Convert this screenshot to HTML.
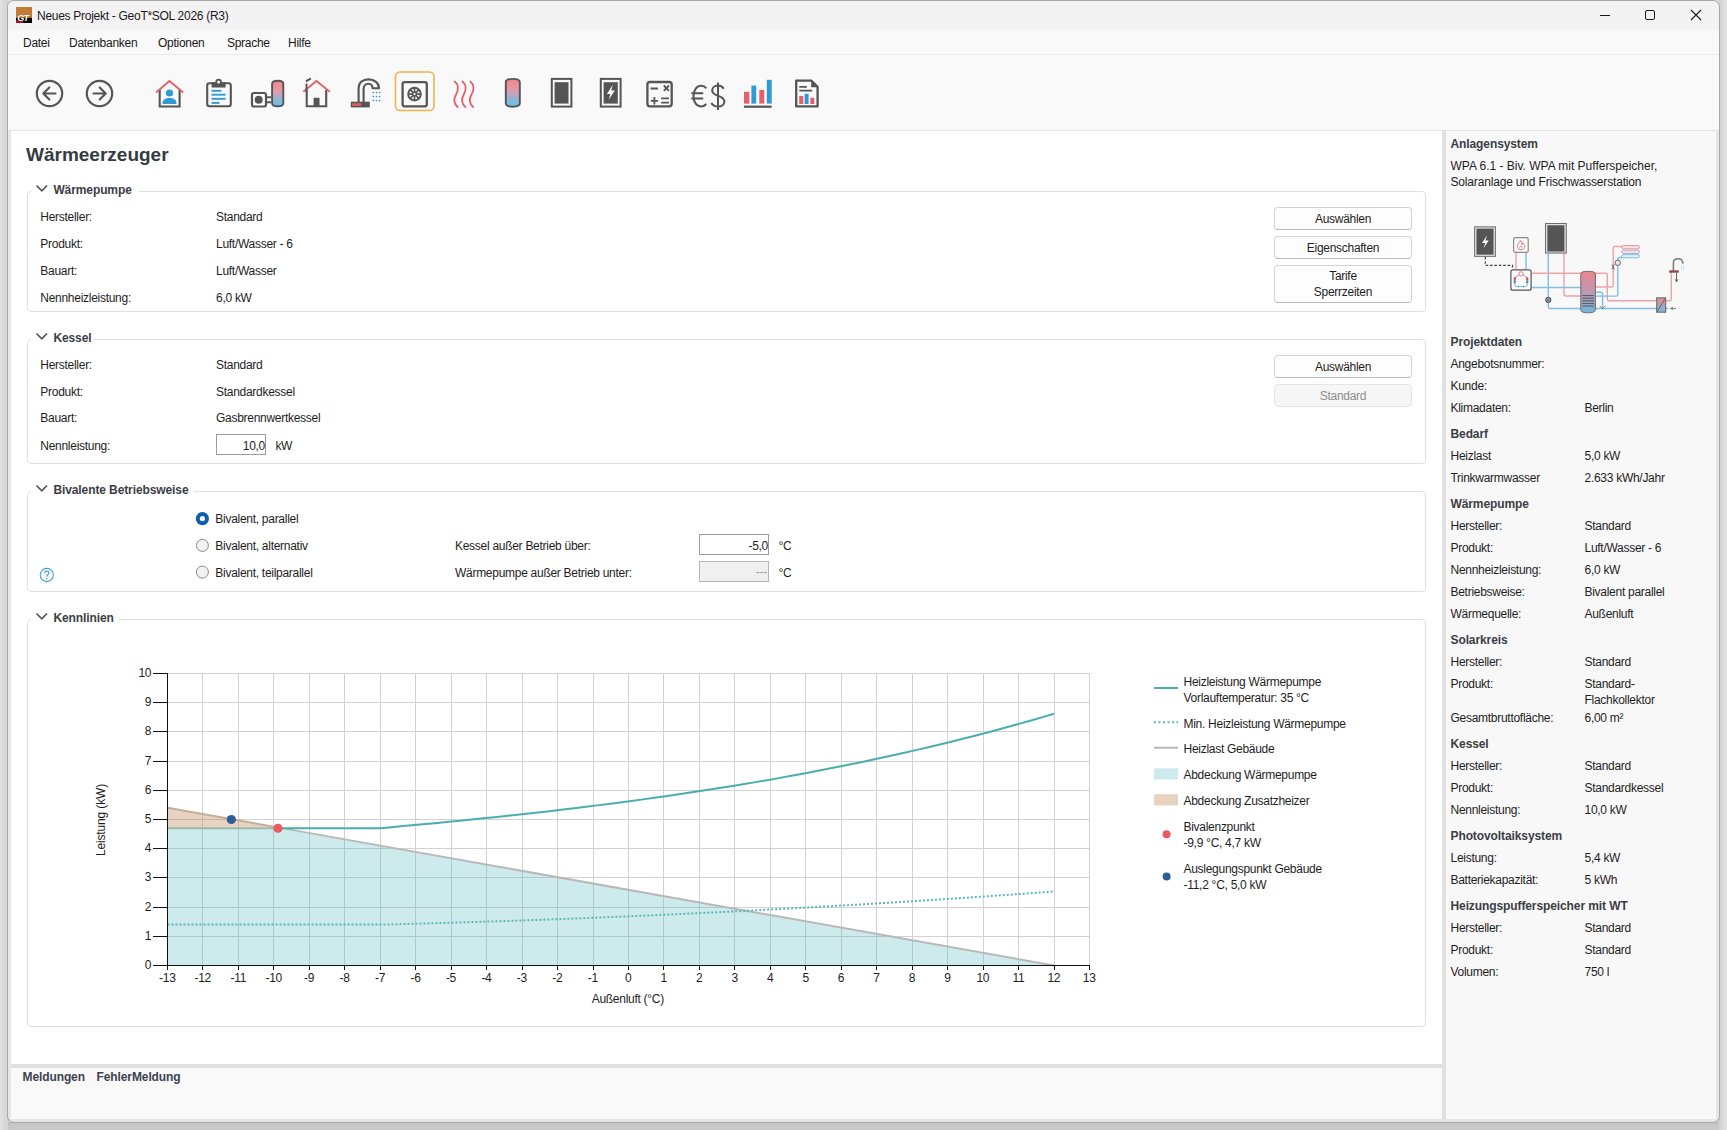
<!DOCTYPE html>
<html><head><meta charset="utf-8"><title>GeoT*SOL</title>
<style>
html,body{margin:0;padding:0;width:1727px;height:1130px;overflow:hidden;background:#dcdcdc}
body{position:relative;font-family:"Liberation Sans",sans-serif}
.t{position:absolute;white-space:nowrap;line-height:1;font-family:"Liberation Sans",sans-serif}
.r{position:absolute;box-sizing:border-box}
svg.r{overflow:visible}
</style></head><body>
<div class="r" style="left:0px;top:0px;width:1727px;height:1130px;background:#dcdcdc"></div>
<div class="r" style="left:0px;top:0px;width:8px;height:1130px;background:linear-gradient(to right,#e2e2e2,#d9d9d9 50%,#d4d4d4)"></div>
<div class="r" style="left:1719px;top:0px;width:8px;height:1130px;background:linear-gradient(to right,#d0d0d0,#dadada 40%,#e2e2e2)"></div>
<div class="r" style="left:8px;top:1122px;width:1711px;height:8px;background:linear-gradient(to bottom,#bdbdbd,#c8c8c8 40%,#cacaca)"></div>
<div class="r" style="left:7px;top:0px;width:1713px;height:1123px;background:#a8a8a8;border-radius:7px"></div>
<div class="r" style="left:8px;top:1px;width:1711px;height:1121px;background:#e6e6e6;border-radius:6px"></div>
<div class="r" style="left:8px;top:1px;width:1711px;height:29px;background:#f3f3f3;border-radius:6px 6px 0 0"></div>
<div class="r" style="left:8px;top:30px;width:1711px;height:100px;background:#f9f9f9"></div>
<div class="r" style="left:8px;top:54px;width:1711px;height:1px;background:#ebebeb"></div>
<div class="r" style="left:8px;top:130px;width:1711px;height:1px;background:#e3e3e3"></div>
<div class="r" style="left:11px;top:131px;width:1431px;height:933px;background:#ffffff"></div>
<div class="r" style="left:1442px;top:131px;width:4px;height:988px;background:#e0e0e0"></div>
<div class="r" style="left:1446px;top:131px;width:270px;height:988px;background:#f8f8f8"></div>
<div class="r" style="left:11px;top:1064px;width:1431px;height:4px;background:#e0e0e0"></div>
<div class="r" style="left:11px;top:1068px;width:1431px;height:51px;background:#f9f9f9"></div>
<svg class="r" style="left:16px;top:7px;" width="16" height="16" viewBox="0 0 16 16"><rect x="0" y="0" width="16" height="16" fill="#c27a36"/><rect x="0" y="10.8" width="16" height="5.2" fill="#000"/><rect x="0" y="13.2" width="7" height="2.8" fill="#a01428"/><text x="1.2" y="14.3" font-family="Liberation Sans" font-weight="bold" font-style="italic" font-size="9" fill="#fff" letter-spacing="-0.6">GT</text></svg>
<div class="t" style="left:37.00px;top:10px;font-size:12px;color:#1a1a1a;letter-spacing:-0.28px;">Neues Projekt - GeoT*SOL 2026 (R3)</div>
<div class="r" style="left:1600px;top:15px;width:10px;height:1px;background:#1a1a1a"></div>
<div class="r" style="left:1645px;top:10px;width:10px;height:10px;border:1px solid #1a1a1a;border-radius:2px;box-sizing:border-box"></div>
<svg class="r" style="left:1690px;top:9px;" width="12" height="12" viewBox="0 0 12 12"><path d="M1 1L11 11M11 1L1 11" stroke="#1a1a1a" stroke-width="1.1"/></svg>
<div class="t" style="left:23.00px;top:37px;font-size:12px;color:#1a1a1a;letter-spacing:-0.28px;">Datei</div>
<div class="t" style="left:69.00px;top:37px;font-size:12px;color:#1a1a1a;letter-spacing:-0.28px;">Datenbanken</div>
<div class="t" style="left:158.00px;top:37px;font-size:12px;color:#1a1a1a;letter-spacing:-0.28px;">Optionen</div>
<div class="t" style="left:227.00px;top:37px;font-size:12px;color:#1a1a1a;letter-spacing:-0.28px;">Sprache</div>
<div class="t" style="left:288.00px;top:37px;font-size:12px;color:#1a1a1a;letter-spacing:-0.28px;">Hilfe</div>
<div class="t" style="left:22.50px;top:1071px;font-size:12px;font-weight:bold;color:#3b4350;letter-spacing:-0.1px;">Meldungen</div>
<div class="t" style="left:96.50px;top:1071px;font-size:12px;font-weight:bold;color:#3b4350;letter-spacing:-0.1px;">FehlerMeldung</div>
<svg class="r" style="left:0px;top:0px;" width="850" height="130" viewBox="0 0 850 130"><circle cx="49.5" cy="93.5" r="12.7" fill="none" stroke="#555555" stroke-width="2.2"/><path d="M55.5 93.5H43.5M49.3 87.5L43.3 93.5L49.3 99.5" fill="none" stroke="#555555" stroke-width="2.2" stroke-linecap="round" stroke-linejoin="round"/><circle cx="99.5" cy="93.5" r="12.7" fill="none" stroke="#555555" stroke-width="2.2"/><path d="M93.5 93.5H105.5M99.7 87.5L105.7 93.5L99.7 99.5" fill="none" stroke="#555555" stroke-width="2.2" stroke-linecap="round" stroke-linejoin="round"/><path d="M159.7 89.5V106.5H179.6V89.5" fill="none" stroke="#555555" stroke-width="2.1"/><path d="M156 92.5L169.5 81L183.2 92.5" fill="none" stroke="#e2606a" stroke-width="1.8"/><circle cx="169.5" cy="93" r="3.6" fill="#2e9bd6"/><path d="M162.6 104V102.5C162.6 99.8 165.5 98 169.5 98C173.5 98 176.4 99.8 176.4 102.5V104Z" fill="#2e9bd6"/><rect x="207.2" y="83.3" width="23.6" height="23" rx="2.2" fill="none" stroke="#555555" stroke-width="2.1"/><rect x="211.6" y="82.3" width="14" height="5.2" fill="#555555"/><circle cx="218.6" cy="82" r="2.4" fill="#f9f9f9" stroke="#555555" stroke-width="1.7"/><path d="M211.5 90.8H221.5" stroke="#2e9bd6" stroke-width="1.9"/><path d="M211.5 94.7H225.6" stroke="#2e9bd6" stroke-width="1.9"/><path d="M211.5 98.8H225.6" stroke="#2e9bd6" stroke-width="1.9"/><path d="M211.5 102.9H219.5" stroke="#2e9bd6" stroke-width="1.9"/><defs><linearGradient id="tg" x1="0" y1="0" x2="0" y2="1"><stop offset="0.1" stop-color="#f08890"/><stop offset="0.4" stop-color="#e29cab"/><stop offset="0.62" stop-color="#aeaac8"/><stop offset="0.9" stop-color="#6cc2e6"/></linearGradient></defs><rect x="252" y="93" width="14" height="13.5" rx="2" fill="#fff" stroke="#555555" stroke-width="2.2"/><circle cx="258.7" cy="99.7" r="4" fill="#555555"/><path d="M266 97.2H271M266 102.3H271" stroke="#555555" stroke-width="2"/><path d="M272.1 84C272.1 82 274.8 80.8 277.8 80.8C280.8 80.8 283.3 82 283.3 84V103.2C283.3 105.2 280.8 106.3 277.8 106.3C274.8 106.3 272.1 105.2 272.1 103.2Z" fill="url(#tg)" stroke="#555555" stroke-width="1.9"/><path d="M306.7 90V106.3H326.2V90" fill="none" stroke="#555555" stroke-width="2.1"/><rect x="313.6" y="97.8" width="5.9" height="8.6" fill="#555555"/><path d="M303.3 91.8L316.4 81L329.9 91.8" fill="none" stroke="#e2606a" stroke-width="1.8"/><path d="M306.5 92V83.5M305.9 81.4L310.9 78.4" fill="none" stroke="#555555" stroke-width="1.9"/><path d="M358.6 102.5V88.5C358.6 82.4 362.8 79.4 368.6 79.4C374.4 79.4 379 83 379 88.2H372.6C372.6 85.6 370.8 83.8 368.4 83.8C365.6 83.8 363.6 85.8 363.6 88.8V102.5" fill="none" stroke="#555555" stroke-width="2.1" stroke-linejoin="round"/><rect x="350.8" y="101.7" width="19" height="5.7" fill="#555555"/><rect x="352" y="103.2" width="9.2" height="2.7" fill="#e05d66"/><circle cx="373.4" cy="92.5" r="0.85" fill="#3f8db8"/><circle cx="376.5" cy="92.5" r="0.85" fill="#3f8db8"/><circle cx="379.6" cy="92.5" r="0.85" fill="#3f8db8"/><circle cx="373.4" cy="96.5" r="0.85" fill="#3f8db8"/><circle cx="376.5" cy="96.5" r="0.85" fill="#3f8db8"/><circle cx="379.6" cy="96.5" r="0.85" fill="#3f8db8"/><circle cx="373.4" cy="100.5" r="0.85" fill="#3f8db8"/><circle cx="376.5" cy="100.5" r="0.85" fill="#3f8db8"/><circle cx="379.6" cy="100.5" r="0.85" fill="#3f8db8"/><rect x="395.5" y="72" width="38.5" height="38.5" rx="4.5" fill="none" stroke="#ebb54f" stroke-width="1.6"/><rect x="402.6" y="82.1" width="24.2" height="24.2" rx="2" fill="none" stroke="#555555" stroke-width="2.3"/><circle cx="414.5" cy="94.1" r="6.3" fill="none" stroke="#555555" stroke-width="2"/><circle cx="414.5" cy="94.1" r="2.6" fill="#555555"/><circle cx="414.5" cy="94.1" r="1.1" fill="#f9f9f9"/><path d="M416.50 94.10L420.50 94.10" stroke="#555555" stroke-width="1.7"/><path d="M415.91 95.51L418.74 98.34" stroke="#555555" stroke-width="1.7"/><path d="M414.50 96.10L414.50 100.10" stroke="#555555" stroke-width="1.7"/><path d="M413.09 95.51L410.26 98.34" stroke="#555555" stroke-width="1.7"/><path d="M412.50 94.10L408.50 94.10" stroke="#555555" stroke-width="1.7"/><path d="M413.09 92.69L410.26 89.86" stroke="#555555" stroke-width="1.7"/><path d="M414.50 92.10L414.50 88.10" stroke="#555555" stroke-width="1.7"/><path d="M415.91 92.69L418.74 89.86" stroke="#555555" stroke-width="1.7"/><path d="M454.7 81.5C458.7 84.5 458.7 90 456.2 94.3C453.7 98.5 453.7 103.5 457.7 107" fill="none" stroke="#e2606a" stroke-width="1.8" stroke-linecap="round"/><path d="M462.4 81.5C466.4 84.5 466.4 90 463.9 94.3C461.4 98.5 461.4 103.5 465.4 107" fill="none" stroke="#e2606a" stroke-width="1.8" stroke-linecap="round"/><path d="M470.2 81.5C474.2 84.5 474.2 90 471.7 94.3C469.2 98.5 469.2 103.5 473.2 107" fill="none" stroke="#e2606a" stroke-width="1.8" stroke-linecap="round"/><path d="M505.8 82.3C505.8 80 509 78.9 512.8 78.9C516.6 78.9 519.8 80 519.8 82.3V103.3C519.8 105.6 516.6 106.7 512.8 106.7C509 106.7 505.8 105.6 505.8 103.3Z" fill="url(#tg)" stroke="#555555" stroke-width="1.9"/><rect x="551.8" y="78.9" width="19.6" height="27.7" fill="none" stroke="#555555" stroke-width="2"/><rect x="554.6" y="82.2" width="13.9" height="21.4" fill="#555555"/><rect x="600.8" y="78.9" width="19.8" height="27.7" fill="none" stroke="#555555" stroke-width="2"/><rect x="603.6" y="82.2" width="14.2" height="21.4" fill="#555555"/><path d="M612.8 84.8L606.9 94H610.4L608.6 99.8L614.9 90.6H611.3Z" fill="#fff"/><rect x="647.4" y="82" width="24.3" height="24.3" rx="2.5" fill="none" stroke="#555555" stroke-width="2.3"/><path d="M650.5 88.5H658M663.8 85.5L669 90.8M669 85.5L663.8 90.8M650.8 100.8H658M654.4 97V104.6M661.2 98.3H669M661.2 102.6H669" stroke="#555555" stroke-width="1.8"/><path d="M706.3 88.3C705 86.6 703.2 85.8 701.3 85.8C696.8 85.8 693.5 90 693.5 96.2C693.5 102.4 696.8 106.4 701.3 106.4C703.2 106.4 705 105.6 706.3 104M691.3 93.2H703.2M691.3 98.6H703.2" fill="none" stroke="#555555" stroke-width="2"/><path d="M723.8 88.8C722.5 86.5 720.3 85.6 718 85.6C714.5 85.6 712.2 87.6 712.2 90.5C712.2 97.2 724.4 94.6 724.4 101.6C724.4 104.7 721.7 106.6 718.1 106.6C715.2 106.6 712.6 105.3 711.3 103M718 82.6V110" fill="none" stroke="#555555" stroke-width="2"/><rect x="743.9" y="105.6" width="27.8" height="2.2" fill="#555555"/><rect x="744" y="91.8" width="5.4" height="11.8" fill="#e2606a"/><rect x="751.4" y="85.6" width="4.8" height="18" fill="#2e9bd6"/><rect x="759.3" y="89.9" width="5" height="13.7" fill="#e2606a"/><rect x="766.8" y="79.8" width="4.9" height="23.8" fill="#2e9bd6"/><path d="M796.2 80.7H811.5L817.6 86.8V106.4H796.2Z" fill="none" stroke="#555555" stroke-width="2.3" stroke-linejoin="round"/><path d="M811.2 80.5L818 87.3H811.2Z" fill="#555555"/><path d="M799.3 86.8H806.8M799.3 90.6H812.2" stroke="#555555" stroke-width="1.7"/><rect x="799.2" y="96" width="4.1" height="8" fill="#e2606a"/><rect x="804.6" y="93.8" width="4" height="10.2" fill="#2e9bd6"/><rect x="810.3" y="97.8" width="4" height="6.2" fill="#e2606a"/></svg>
<div class="t" style="left:26.00px;top:145px;font-size:19px;font-weight:bold;color:#363a41;">Wärmeerzeuger</div>
<div class="r" style="left:27px;top:191px;width:1399px;height:121px;border:1px solid #e0e0e0;border-radius:4px"></div>
<div class="r" style="left:31px;top:188px;width:107.5px;height:7px;background:#fff"></div>
<svg class="r" style="left:35px;top:184px;" width="14" height="9" viewBox="0 0 14 9"><path d="M1.5 1.5L6.8 6.8L12.1 1.5" fill="none" stroke="#555" stroke-width="1.7"/></svg>
<div class="t" style="left:53.40px;top:184px;font-size:12px;font-weight:bold;color:#3b3e45;letter-spacing:-0.1px;">Wärmepumpe</div>
<div class="t" style="left:40.30px;top:211px;font-size:12px;color:#1e1e1e;letter-spacing:-0.28px;">Hersteller:</div>
<div class="t" style="left:216.00px;top:211px;font-size:12px;color:#1e1e1e;letter-spacing:-0.28px;">Standard</div>
<div class="t" style="left:40.30px;top:238px;font-size:12px;color:#1e1e1e;letter-spacing:-0.28px;">Produkt:</div>
<div class="t" style="left:216.00px;top:238px;font-size:12px;color:#1e1e1e;letter-spacing:-0.28px;">Luft/Wasser - 6</div>
<div class="t" style="left:40.30px;top:265px;font-size:12px;color:#1e1e1e;letter-spacing:-0.28px;">Bauart:</div>
<div class="t" style="left:216.00px;top:265px;font-size:12px;color:#1e1e1e;letter-spacing:-0.28px;">Luft/Wasser</div>
<div class="t" style="left:40.30px;top:292px;font-size:12px;color:#1e1e1e;letter-spacing:-0.28px;">Nennheizleistung:</div>
<div class="t" style="left:216.00px;top:292px;font-size:12px;color:#1e1e1e;letter-spacing:-0.28px;">6,0 kW</div>
<div class="r" style="left:1274px;top:207px;width:138px;height:23px;background:#fdfdfd;border:1px solid #d3d3d3;border-bottom-color:#b9b9b9;border-radius:4px"></div>
<div class="t" style="left:1043.00px;width:600px;text-align:center;top:213px;font-size:12px;color:#1e1e1e;letter-spacing:-0.28px;">Auswählen</div>
<div class="r" style="left:1274px;top:236px;width:138px;height:23px;background:#fdfdfd;border:1px solid #d3d3d3;border-bottom-color:#b9b9b9;border-radius:4px"></div>
<div class="t" style="left:1043.00px;width:600px;text-align:center;top:242px;font-size:12px;color:#1e1e1e;letter-spacing:-0.28px;">Eigenschaften</div>
<div class="r" style="left:1274px;top:265px;width:138px;height:38px;background:#fdfdfd;border:1px solid #d3d3d3;border-bottom-color:#b9b9b9;border-radius:4px"></div>
<div class="t" style="left:1043.00px;width:600px;text-align:center;top:270px;font-size:12px;color:#1e1e1e;letter-spacing:-0.28px;">Tarife</div>
<div class="t" style="left:1043.00px;width:600px;text-align:center;top:286px;font-size:12px;color:#1e1e1e;letter-spacing:-0.28px;">Sperrzeiten</div>
<div class="r" style="left:27px;top:339px;width:1399px;height:125px;border:1px solid #e0e0e0;border-radius:4px"></div>
<div class="r" style="left:31px;top:336px;width:62px;height:7px;background:#fff"></div>
<svg class="r" style="left:35px;top:332px;" width="14" height="9" viewBox="0 0 14 9"><path d="M1.5 1.5L6.8 6.8L12.1 1.5" fill="none" stroke="#555" stroke-width="1.7"/></svg>
<div class="t" style="left:53.40px;top:332px;font-size:12px;font-weight:bold;color:#3b3e45;letter-spacing:-0.1px;">Kessel</div>
<div class="t" style="left:40.30px;top:359px;font-size:12px;color:#1e1e1e;letter-spacing:-0.28px;">Hersteller:</div>
<div class="t" style="left:216.00px;top:359px;font-size:12px;color:#1e1e1e;letter-spacing:-0.28px;">Standard</div>
<div class="t" style="left:40.30px;top:386px;font-size:12px;color:#1e1e1e;letter-spacing:-0.28px;">Produkt:</div>
<div class="t" style="left:216.00px;top:386px;font-size:12px;color:#1e1e1e;letter-spacing:-0.28px;">Standardkessel</div>
<div class="t" style="left:40.30px;top:412px;font-size:12px;color:#1e1e1e;letter-spacing:-0.28px;">Bauart:</div>
<div class="t" style="left:216.00px;top:412px;font-size:12px;color:#1e1e1e;letter-spacing:-0.28px;">Gasbrennwertkessel</div>
<div class="t" style="left:40.30px;top:440px;font-size:12px;color:#1e1e1e;letter-spacing:-0.28px;">Nennleistung:</div>
<div class="r" style="left:216px;top:434px;width:50px;height:21px;background:#fff;border:1px solid #9c9c9c"></div>
<div class="t" style="left:-335.00px;width:600px;text-align:right;top:440px;font-size:12px;color:#1e1e1e;letter-spacing:-0.28px;">10,0</div>
<div class="t" style="left:275.40px;top:440px;font-size:12px;color:#1e1e1e;letter-spacing:-0.28px;">kW</div>
<div class="r" style="left:1274px;top:355px;width:138px;height:23px;background:#fdfdfd;border:1px solid #d3d3d3;border-bottom-color:#b9b9b9;border-radius:4px"></div>
<div class="t" style="left:1043.00px;width:600px;text-align:center;top:361px;font-size:12px;color:#1e1e1e;letter-spacing:-0.28px;">Auswählen</div>
<div class="r" style="left:1274px;top:384px;width:138px;height:23px;background:#f6f6f6;border:1px solid #e6e6e6;border-radius:4px"></div>
<div class="t" style="left:1043.00px;width:600px;text-align:center;top:390px;font-size:12px;color:#8d8d8d;letter-spacing:-0.28px;">Standard</div>
<div class="r" style="left:27px;top:491px;width:1399px;height:101px;border:1px solid #e0e0e0;border-radius:4px"></div>
<div class="r" style="left:31px;top:488px;width:163px;height:7px;background:#fff"></div>
<svg class="r" style="left:35px;top:484px;" width="14" height="9" viewBox="0 0 14 9"><path d="M1.5 1.5L6.8 6.8L12.1 1.5" fill="none" stroke="#555" stroke-width="1.7"/></svg>
<div class="t" style="left:53.40px;top:484px;font-size:12px;font-weight:bold;color:#3b3e45;letter-spacing:-0.1px;">Bivalente Betriebsweise</div>
<svg class="r" style="left:195px;top:511px;" width="15" height="15" viewBox="0 0 15 15"><circle cx="7.4" cy="7.6" r="6.6" fill="#0c5cb0"/><circle cx="7.4" cy="7.6" r="2.6" fill="#fff"/></svg>
<svg class="r" style="left:195px;top:538px;" width="15" height="15" viewBox="0 0 15 15"><circle cx="7.4" cy="7.4" r="6" fill="#f2f2f2" stroke="#8a8a8a" stroke-width="1"/></svg>
<svg class="r" style="left:195px;top:565px;" width="15" height="15" viewBox="0 0 15 15"><circle cx="7.4" cy="7.1" r="6" fill="#f2f2f2" stroke="#8a8a8a" stroke-width="1"/></svg>
<div class="t" style="left:215.30px;top:513px;font-size:12px;color:#1e1e1e;letter-spacing:-0.28px;">Bivalent, parallel</div>
<div class="t" style="left:215.30px;top:540px;font-size:12px;color:#1e1e1e;letter-spacing:-0.28px;">Bivalent, alternativ</div>
<div class="t" style="left:215.30px;top:567px;font-size:12px;color:#1e1e1e;letter-spacing:-0.28px;">Bivalent, teilparallel</div>
<svg class="r" style="left:39px;top:567px;" width="16" height="16" viewBox="0 0 16 16"><circle cx="7.8" cy="8" r="6.6" fill="none" stroke="#3aa3d6" stroke-width="1.1"/><path d="M5.7 6.2C5.7 4.9 6.6 4.1 7.8 4.1C9 4.1 9.9 4.9 9.9 6C9.9 7.4 7.8 7.6 7.8 9.3V9.8" fill="none" stroke="#3aa3d6" stroke-width="1.1"/><circle cx="7.8" cy="11.7" r="0.7" fill="#3aa3d6"/></svg>
<div class="t" style="left:455.00px;top:540px;font-size:12px;color:#1e1e1e;letter-spacing:-0.28px;">Kessel außer Betrieb über:</div>
<div class="t" style="left:455.00px;top:567px;font-size:12px;color:#1e1e1e;letter-spacing:-0.28px;">Wärmepumpe außer Betrieb unter:</div>
<div class="r" style="left:699px;top:534px;width:70px;height:21px;background:#fff;border:1px solid #9c9c9c"></div>
<div class="t" style="left:168.00px;width:600px;text-align:right;top:540px;font-size:12px;color:#1e1e1e;letter-spacing:-0.28px;">-5,0</div>
<div class="r" style="left:699px;top:561px;width:70px;height:21px;background:#f0f0f0;border:1px solid #b5b5b5"></div>
<div class="t" style="left:167.00px;width:600px;text-align:right;top:566px;font-size:12px;color:#9a9a9a;letter-spacing:-0.28px;">---</div>
<div class="t" style="left:778.60px;top:540px;font-size:12px;color:#1e1e1e;letter-spacing:-0.28px;">°C</div>
<div class="t" style="left:778.60px;top:567px;font-size:12px;color:#1e1e1e;letter-spacing:-0.28px;">°C</div>
<div class="r" style="left:27px;top:619px;width:1399px;height:408px;border:1px solid #e0e0e0;border-radius:4px"></div>
<div class="r" style="left:31px;top:616px;width:87.5px;height:7px;background:#fff"></div>
<svg class="r" style="left:35px;top:612px;" width="14" height="9" viewBox="0 0 14 9"><path d="M1.5 1.5L6.8 6.8L12.1 1.5" fill="none" stroke="#555" stroke-width="1.7"/></svg>
<div class="t" style="left:53.40px;top:612px;font-size:12px;font-weight:bold;color:#3b3e45;letter-spacing:-0.1px;">Kennlinien</div>
<svg class="r" style="left:0px;top:0px;" width="1100" height="1000" viewBox="0 0 1100 1000"><rect x="202" y="673" width="1" height="292" fill="#d2d2d2"/><rect x="238" y="673" width="1" height="292" fill="#d2d2d2"/><rect x="273" y="673" width="1" height="292" fill="#d2d2d2"/><rect x="309" y="673" width="1" height="292" fill="#d2d2d2"/><rect x="344" y="673" width="1" height="292" fill="#d2d2d2"/><rect x="380" y="673" width="1" height="292" fill="#d2d2d2"/><rect x="415" y="673" width="1" height="292" fill="#d2d2d2"/><rect x="451" y="673" width="1" height="292" fill="#d2d2d2"/><rect x="486" y="673" width="1" height="292" fill="#d2d2d2"/><rect x="522" y="673" width="1" height="292" fill="#d2d2d2"/><rect x="557" y="673" width="1" height="292" fill="#d2d2d2"/><rect x="593" y="673" width="1" height="292" fill="#d2d2d2"/><rect x="628" y="673" width="1" height="292" fill="#d2d2d2"/><rect x="663" y="673" width="1" height="292" fill="#d2d2d2"/><rect x="699" y="673" width="1" height="292" fill="#d2d2d2"/><rect x="734" y="673" width="1" height="292" fill="#d2d2d2"/><rect x="770" y="673" width="1" height="292" fill="#d2d2d2"/><rect x="805" y="673" width="1" height="292" fill="#d2d2d2"/><rect x="841" y="673" width="1" height="292" fill="#d2d2d2"/><rect x="876" y="673" width="1" height="292" fill="#d2d2d2"/><rect x="912" y="673" width="1" height="292" fill="#d2d2d2"/><rect x="947" y="673" width="1" height="292" fill="#d2d2d2"/><rect x="983" y="673" width="1" height="292" fill="#d2d2d2"/><rect x="1018" y="673" width="1" height="292" fill="#d2d2d2"/><rect x="1054" y="673" width="1" height="292" fill="#d2d2d2"/><rect x="1089" y="673" width="1" height="292" fill="#d2d2d2"/><rect x="168" y="936" width="922" height="1" fill="#d2d2d2"/><rect x="168" y="907" width="922" height="1" fill="#d2d2d2"/><rect x="168" y="877" width="922" height="1" fill="#d2d2d2"/><rect x="168" y="848" width="922" height="1" fill="#d2d2d2"/><rect x="168" y="819" width="922" height="1" fill="#d2d2d2"/><rect x="168" y="790" width="922" height="1" fill="#d2d2d2"/><rect x="168" y="761" width="922" height="1" fill="#d2d2d2"/><rect x="168" y="731" width="922" height="1" fill="#d2d2d2"/><rect x="168" y="702" width="922" height="1" fill="#d2d2d2"/><rect x="168" y="673" width="922" height="1" fill="#d2d2d2"/><path d="M167.50 965.50 L167.50 828.26 L277.43 828.26 L1054.00 965.50Z" fill="rgba(70,180,185,0.27)"/><path d="M167.50 807.82 L277.43 827.37 L167.50 828.26Z" fill="rgba(190,130,80,0.35)"/><path d="M167.50 807.82L277.43 827.37" stroke="#c2ad95" stroke-width="2" fill="none"/><path d="M277.43 827.37L1054.00 965.50" stroke="#b8b8b8" stroke-width="2" fill="none"/><path d="M167.50 828.26L277.43 828.26" stroke="#9db8a8" stroke-width="2" fill="none"/><path d="M277.43 828.26 L380.26 828.26 L380.26 828.18 L391.68 827.15 L403.10 826.11 L414.52 825.06 L425.94 823.99 L437.36 822.90 L448.78 821.79 L460.20 820.67 L471.61 819.52 L483.03 818.36 L494.45 817.17 L505.87 815.96 L517.29 814.73 L528.71 813.47 L540.13 812.19 L551.55 810.89 L562.97 809.55 L574.39 808.19 L585.81 806.80 L597.23 805.38 L608.65 803.93 L620.07 802.45 L631.49 800.93 L642.90 799.38 L654.32 797.80 L665.74 796.18 L677.16 794.53 L688.58 792.84 L700.00 791.11 L711.42 789.35 L722.84 787.54 L734.26 785.69 L745.68 783.80 L757.10 781.87 L768.52 779.90 L779.94 777.88 L791.36 775.82 L802.77 773.71 L814.19 771.55 L825.61 769.34 L837.03 767.09 L848.45 764.79 L859.87 762.43 L871.29 760.03 L882.71 757.57 L894.13 755.06 L905.55 752.50 L916.97 749.87 L928.39 747.20 L939.81 744.46 L951.23 741.67 L962.65 738.82 L974.06 735.91 L985.48 732.94 L996.90 729.91 L1008.32 726.81 L1019.74 723.66 L1031.16 720.43 L1042.58 717.15 L1054.00 713.79" stroke="#4aaeb0" stroke-width="2" fill="none" stroke-linejoin="round"/><path d="M167.50 924.62 L380.26 924.62 L380.26 924.62 L391.68 924.34 L403.10 924.04 L414.52 923.74 L425.94 923.43 L437.36 923.11 L448.78 922.78 L460.20 922.44 L471.61 922.09 L483.03 921.73 L494.45 921.36 L505.87 920.98 L517.29 920.59 L528.71 920.19 L540.13 919.78 L551.55 919.37 L562.97 918.94 L574.39 918.50 L585.81 918.06 L597.23 917.60 L608.65 917.14 L620.07 916.66 L631.49 916.18 L642.90 915.68 L654.32 915.18 L665.74 914.66 L677.16 914.14 L688.58 913.61 L700.00 913.07 L711.42 912.51 L722.84 911.95 L734.26 911.38 L745.68 910.80 L757.10 910.21 L768.52 909.61 L779.94 909.00 L791.36 908.38 L802.77 907.75 L814.19 907.12 L825.61 906.47 L837.03 905.81 L848.45 905.14 L859.87 904.47 L871.29 903.78 L882.71 903.08 L894.13 902.38 L905.55 901.66 L916.97 900.94 L928.39 900.21 L939.81 899.46 L951.23 898.71 L962.65 897.94 L974.06 897.17 L985.48 896.39 L996.90 895.60 L1008.32 894.80 L1019.74 893.99 L1031.16 893.16 L1042.58 892.33 L1054.00 891.49" stroke="#5cb6b6" stroke-width="2" stroke-dasharray="2 2" fill="none"/><rect x="167" y="673" width="1" height="297" fill="#111"/><rect x="153" y="965" width="937" height="1" fill="#111"/><rect x="153" y="965" width="14" height="1" fill="#111"/><rect x="153" y="936" width="14" height="1" fill="#111"/><rect x="153" y="907" width="14" height="1" fill="#111"/><rect x="153" y="877" width="14" height="1" fill="#111"/><rect x="153" y="848" width="14" height="1" fill="#111"/><rect x="153" y="819" width="14" height="1" fill="#111"/><rect x="153" y="790" width="14" height="1" fill="#111"/><rect x="153" y="761" width="14" height="1" fill="#111"/><rect x="153" y="731" width="14" height="1" fill="#111"/><rect x="153" y="702" width="14" height="1" fill="#111"/><rect x="153" y="673" width="14" height="1" fill="#111"/><rect x="167" y="965" width="1" height="5" fill="#111"/><rect x="202" y="965" width="1" height="5" fill="#111"/><rect x="238" y="965" width="1" height="5" fill="#111"/><rect x="273" y="965" width="1" height="5" fill="#111"/><rect x="309" y="965" width="1" height="5" fill="#111"/><rect x="344" y="965" width="1" height="5" fill="#111"/><rect x="380" y="965" width="1" height="5" fill="#111"/><rect x="415" y="965" width="1" height="5" fill="#111"/><rect x="451" y="965" width="1" height="5" fill="#111"/><rect x="486" y="965" width="1" height="5" fill="#111"/><rect x="522" y="965" width="1" height="5" fill="#111"/><rect x="557" y="965" width="1" height="5" fill="#111"/><rect x="593" y="965" width="1" height="5" fill="#111"/><rect x="628" y="965" width="1" height="5" fill="#111"/><rect x="663" y="965" width="1" height="5" fill="#111"/><rect x="699" y="965" width="1" height="5" fill="#111"/><rect x="734" y="965" width="1" height="5" fill="#111"/><rect x="770" y="965" width="1" height="5" fill="#111"/><rect x="805" y="965" width="1" height="5" fill="#111"/><rect x="841" y="965" width="1" height="5" fill="#111"/><rect x="876" y="965" width="1" height="5" fill="#111"/><rect x="912" y="965" width="1" height="5" fill="#111"/><rect x="947" y="965" width="1" height="5" fill="#111"/><rect x="983" y="965" width="1" height="5" fill="#111"/><rect x="1018" y="965" width="1" height="5" fill="#111"/><rect x="1054" y="965" width="1" height="5" fill="#111"/><rect x="1089" y="965" width="1" height="5" fill="#111"/><circle cx="231.33" cy="819.50" r="4.6" fill="#2b5e98"/><circle cx="278.03" cy="828.26" r="4.6" fill="#e75b61"/></svg>
<div class="t" style="left:-448.80px;width:600px;text-align:right;top:959px;font-size:12px;color:#1e1e1e;letter-spacing:-0.28px;">0</div>
<div class="t" style="left:-448.80px;width:600px;text-align:right;top:930px;font-size:12px;color:#1e1e1e;letter-spacing:-0.28px;">1</div>
<div class="t" style="left:-448.80px;width:600px;text-align:right;top:901px;font-size:12px;color:#1e1e1e;letter-spacing:-0.28px;">2</div>
<div class="t" style="left:-448.80px;width:600px;text-align:right;top:871px;font-size:12px;color:#1e1e1e;letter-spacing:-0.28px;">3</div>
<div class="t" style="left:-448.80px;width:600px;text-align:right;top:842px;font-size:12px;color:#1e1e1e;letter-spacing:-0.28px;">4</div>
<div class="t" style="left:-448.80px;width:600px;text-align:right;top:813px;font-size:12px;color:#1e1e1e;letter-spacing:-0.28px;">5</div>
<div class="t" style="left:-448.80px;width:600px;text-align:right;top:784px;font-size:12px;color:#1e1e1e;letter-spacing:-0.28px;">6</div>
<div class="t" style="left:-448.80px;width:600px;text-align:right;top:755px;font-size:12px;color:#1e1e1e;letter-spacing:-0.28px;">7</div>
<div class="t" style="left:-448.80px;width:600px;text-align:right;top:725px;font-size:12px;color:#1e1e1e;letter-spacing:-0.28px;">8</div>
<div class="t" style="left:-448.80px;width:600px;text-align:right;top:696px;font-size:12px;color:#1e1e1e;letter-spacing:-0.28px;">9</div>
<div class="t" style="left:-448.80px;width:600px;text-align:right;top:667px;font-size:12px;color:#1e1e1e;letter-spacing:-0.28px;">10</div>
<div class="t" style="left:-132.70px;width:600px;text-align:center;top:972px;font-size:12px;color:#1e1e1e;letter-spacing:-0.28px;">-13</div>
<div class="t" style="left:-97.24px;width:600px;text-align:center;top:972px;font-size:12px;color:#1e1e1e;letter-spacing:-0.28px;">-12</div>
<div class="t" style="left:-61.78px;width:600px;text-align:center;top:972px;font-size:12px;color:#1e1e1e;letter-spacing:-0.28px;">-11</div>
<div class="t" style="left:-26.32px;width:600px;text-align:center;top:972px;font-size:12px;color:#1e1e1e;letter-spacing:-0.28px;">-10</div>
<div class="t" style="left:9.14px;width:600px;text-align:center;top:972px;font-size:12px;color:#1e1e1e;letter-spacing:-0.28px;">-9</div>
<div class="t" style="left:44.60px;width:600px;text-align:center;top:972px;font-size:12px;color:#1e1e1e;letter-spacing:-0.28px;">-8</div>
<div class="t" style="left:80.06px;width:600px;text-align:center;top:972px;font-size:12px;color:#1e1e1e;letter-spacing:-0.28px;">-7</div>
<div class="t" style="left:115.52px;width:600px;text-align:center;top:972px;font-size:12px;color:#1e1e1e;letter-spacing:-0.28px;">-6</div>
<div class="t" style="left:150.98px;width:600px;text-align:center;top:972px;font-size:12px;color:#1e1e1e;letter-spacing:-0.28px;">-5</div>
<div class="t" style="left:186.44px;width:600px;text-align:center;top:972px;font-size:12px;color:#1e1e1e;letter-spacing:-0.28px;">-4</div>
<div class="t" style="left:221.90px;width:600px;text-align:center;top:972px;font-size:12px;color:#1e1e1e;letter-spacing:-0.28px;">-3</div>
<div class="t" style="left:257.36px;width:600px;text-align:center;top:972px;font-size:12px;color:#1e1e1e;letter-spacing:-0.28px;">-2</div>
<div class="t" style="left:292.82px;width:600px;text-align:center;top:972px;font-size:12px;color:#1e1e1e;letter-spacing:-0.28px;">-1</div>
<div class="t" style="left:328.28px;width:600px;text-align:center;top:972px;font-size:12px;color:#1e1e1e;letter-spacing:-0.28px;">0</div>
<div class="t" style="left:363.74px;width:600px;text-align:center;top:972px;font-size:12px;color:#1e1e1e;letter-spacing:-0.28px;">1</div>
<div class="t" style="left:399.20px;width:600px;text-align:center;top:972px;font-size:12px;color:#1e1e1e;letter-spacing:-0.28px;">2</div>
<div class="t" style="left:434.66px;width:600px;text-align:center;top:972px;font-size:12px;color:#1e1e1e;letter-spacing:-0.28px;">3</div>
<div class="t" style="left:470.12px;width:600px;text-align:center;top:972px;font-size:12px;color:#1e1e1e;letter-spacing:-0.28px;">4</div>
<div class="t" style="left:505.58px;width:600px;text-align:center;top:972px;font-size:12px;color:#1e1e1e;letter-spacing:-0.28px;">5</div>
<div class="t" style="left:541.04px;width:600px;text-align:center;top:972px;font-size:12px;color:#1e1e1e;letter-spacing:-0.28px;">6</div>
<div class="t" style="left:576.50px;width:600px;text-align:center;top:972px;font-size:12px;color:#1e1e1e;letter-spacing:-0.28px;">7</div>
<div class="t" style="left:611.96px;width:600px;text-align:center;top:972px;font-size:12px;color:#1e1e1e;letter-spacing:-0.28px;">8</div>
<div class="t" style="left:647.42px;width:600px;text-align:center;top:972px;font-size:12px;color:#1e1e1e;letter-spacing:-0.28px;">9</div>
<div class="t" style="left:682.88px;width:600px;text-align:center;top:972px;font-size:12px;color:#1e1e1e;letter-spacing:-0.28px;">10</div>
<div class="t" style="left:718.34px;width:600px;text-align:center;top:972px;font-size:12px;color:#1e1e1e;letter-spacing:-0.28px;">11</div>
<div class="t" style="left:753.80px;width:600px;text-align:center;top:972px;font-size:12px;color:#1e1e1e;letter-spacing:-0.28px;">12</div>
<div class="t" style="left:789.26px;width:600px;text-align:center;top:972px;font-size:12px;color:#1e1e1e;letter-spacing:-0.28px;">13</div>
<div class="t" style="left:327.80px;width:600px;text-align:center;top:993px;font-size:12px;color:#1e1e1e;letter-spacing:-0.28px;">Außenluft (°C)</div>
<div class="t" style="left:51px;top:813.5px;width:100px;text-align:center;font-size:12px;letter-spacing:-0.15px;color:#1e1e1e;transform:rotate(-90deg);line-height:12px">Leistung (kW)</div>
<svg class="r" style="left:0px;top:0px;" width="1200" height="900" viewBox="0 0 1200 900"><path d="M1154 688H1178" stroke="#4aaeb0" stroke-width="2"/><path d="M1154 722.2H1178" stroke="#5cb6b6" stroke-width="2" stroke-dasharray="2 2.5"/><path d="M1154 747.7H1178" stroke="#b8b8b8" stroke-width="2"/><rect x="1154" y="768.3" width="24" height="11.2" fill="rgba(70,180,185,0.27)"/><rect x="1154" y="794.2" width="24" height="11.2" fill="rgba(190,130,80,0.35)"/><circle cx="1166.6" cy="834.3" r="4" fill="#e75b61"/><circle cx="1166.6" cy="876.5" r="4" fill="#2b5e98"/></svg>
<div class="t" style="left:1183.50px;top:676px;font-size:12px;color:#1e1e1e;letter-spacing:-0.28px;">Heizleistung Wärmepumpe</div>
<div class="t" style="left:1183.50px;top:692px;font-size:12px;color:#1e1e1e;letter-spacing:-0.28px;">Vorlauftemperatur: 35 °C</div>
<div class="t" style="left:1183.50px;top:718px;font-size:12px;color:#1e1e1e;letter-spacing:-0.28px;">Min. Heizleistung Wärmepumpe</div>
<div class="t" style="left:1183.50px;top:743px;font-size:12px;color:#1e1e1e;letter-spacing:-0.28px;">Heizlast Gebäude</div>
<div class="t" style="left:1183.50px;top:769px;font-size:12px;color:#1e1e1e;letter-spacing:-0.28px;">Abdeckung Wärmepumpe</div>
<div class="t" style="left:1183.50px;top:795px;font-size:12px;color:#1e1e1e;letter-spacing:-0.28px;">Abdeckung Zusatzheizer</div>
<div class="t" style="left:1183.50px;top:821px;font-size:12px;color:#1e1e1e;letter-spacing:-0.28px;">Bivalenzpunkt</div>
<div class="t" style="left:1183.50px;top:837px;font-size:12px;color:#1e1e1e;letter-spacing:-0.28px;">-9,9 °C, 4,7 kW</div>
<div class="t" style="left:1183.50px;top:863px;font-size:12px;color:#1e1e1e;letter-spacing:-0.28px;">Auslegungspunkt Gebäude</div>
<div class="t" style="left:1183.50px;top:879px;font-size:12px;color:#1e1e1e;letter-spacing:-0.28px;">-11,2 °C, 5,0 kW</div>
<div class="t" style="left:1450.50px;top:138px;font-size:12px;font-weight:bold;color:#3b3e45;letter-spacing:-0.1px;">Anlagensystem</div>
<div class="t" style="left:1450.50px;top:160px;font-size:12px;color:#1e1e1e;letter-spacing:-0.01px;">WPA 6.1 - Biv. WPA mit Pufferspeicher,</div>
<div class="t" style="left:1450.50px;top:176px;font-size:12px;color:#1e1e1e;letter-spacing:-0.17px;">Solaranlage und Frischwasserstation</div>
<div class="t" style="left:1450.50px;top:336px;font-size:12px;font-weight:bold;color:#3b3e45;letter-spacing:-0.1px;">Projektdaten</div>
<div class="t" style="left:1450.50px;top:358px;font-size:12px;color:#1e1e1e;letter-spacing:-0.28px;">Angebotsnummer:</div>
<div class="t" style="left:1450.50px;top:380px;font-size:12px;color:#1e1e1e;letter-spacing:-0.28px;">Kunde:</div>
<div class="t" style="left:1450.50px;top:402px;font-size:12px;color:#1e1e1e;letter-spacing:-0.28px;">Klimadaten:</div>
<div class="t" style="left:1584.50px;top:402px;font-size:12px;color:#1e1e1e;letter-spacing:-0.28px;">Berlin</div>
<div class="t" style="left:1450.50px;top:428px;font-size:12px;font-weight:bold;color:#3b3e45;letter-spacing:-0.1px;">Bedarf</div>
<div class="t" style="left:1450.50px;top:450px;font-size:12px;color:#1e1e1e;letter-spacing:-0.28px;">Heizlast</div>
<div class="t" style="left:1584.50px;top:450px;font-size:12px;color:#1e1e1e;letter-spacing:-0.28px;">5,0 kW</div>
<div class="t" style="left:1450.50px;top:472px;font-size:12px;color:#1e1e1e;letter-spacing:-0.28px;">Trinkwarmwasser</div>
<div class="t" style="left:1584.50px;top:472px;font-size:12px;color:#1e1e1e;letter-spacing:-0.28px;">2.633 kWh/Jahr</div>
<div class="t" style="left:1450.50px;top:498px;font-size:12px;font-weight:bold;color:#3b3e45;letter-spacing:-0.1px;">Wärmepumpe</div>
<div class="t" style="left:1450.50px;top:520px;font-size:12px;color:#1e1e1e;letter-spacing:-0.28px;">Hersteller:</div>
<div class="t" style="left:1584.50px;top:520px;font-size:12px;color:#1e1e1e;letter-spacing:-0.28px;">Standard</div>
<div class="t" style="left:1450.50px;top:542px;font-size:12px;color:#1e1e1e;letter-spacing:-0.28px;">Produkt:</div>
<div class="t" style="left:1584.50px;top:542px;font-size:12px;color:#1e1e1e;letter-spacing:-0.28px;">Luft/Wasser - 6</div>
<div class="t" style="left:1450.50px;top:564px;font-size:12px;color:#1e1e1e;letter-spacing:-0.28px;">Nennheizleistung:</div>
<div class="t" style="left:1584.50px;top:564px;font-size:12px;color:#1e1e1e;letter-spacing:-0.28px;">6,0 kW</div>
<div class="t" style="left:1450.50px;top:586px;font-size:12px;color:#1e1e1e;letter-spacing:-0.28px;">Betriebsweise:</div>
<div class="t" style="left:1584.50px;top:586px;font-size:12px;color:#1e1e1e;letter-spacing:-0.28px;">Bivalent parallel</div>
<div class="t" style="left:1450.50px;top:608px;font-size:12px;color:#1e1e1e;letter-spacing:-0.28px;">Wärmequelle:</div>
<div class="t" style="left:1584.50px;top:608px;font-size:12px;color:#1e1e1e;letter-spacing:-0.28px;">Außenluft</div>
<div class="t" style="left:1450.50px;top:634px;font-size:12px;font-weight:bold;color:#3b3e45;letter-spacing:-0.1px;">Solarkreis</div>
<div class="t" style="left:1450.50px;top:656px;font-size:12px;color:#1e1e1e;letter-spacing:-0.28px;">Hersteller:</div>
<div class="t" style="left:1584.50px;top:656px;font-size:12px;color:#1e1e1e;letter-spacing:-0.28px;">Standard</div>
<div class="t" style="left:1450.50px;top:678px;font-size:12px;color:#1e1e1e;letter-spacing:-0.28px;">Produkt:</div>
<div class="t" style="left:1584.50px;top:678px;font-size:12px;color:#1e1e1e;letter-spacing:-0.28px;">Standard-</div>
<div class="t" style="left:1584.50px;top:694px;font-size:12px;color:#1e1e1e;letter-spacing:-0.28px;">Flachkollektor</div>
<div class="t" style="left:1450.50px;top:712px;font-size:12px;color:#1e1e1e;letter-spacing:-0.28px;">Gesamtbruttofläche:</div>
<div class="t" style="left:1584.50px;top:712px;font-size:12px;color:#1e1e1e;letter-spacing:-0.28px;">6,00 m²</div>
<div class="t" style="left:1450.50px;top:738px;font-size:12px;font-weight:bold;color:#3b3e45;letter-spacing:-0.1px;">Kessel</div>
<div class="t" style="left:1450.50px;top:760px;font-size:12px;color:#1e1e1e;letter-spacing:-0.28px;">Hersteller:</div>
<div class="t" style="left:1584.50px;top:760px;font-size:12px;color:#1e1e1e;letter-spacing:-0.28px;">Standard</div>
<div class="t" style="left:1450.50px;top:782px;font-size:12px;color:#1e1e1e;letter-spacing:-0.28px;">Produkt:</div>
<div class="t" style="left:1584.50px;top:782px;font-size:12px;color:#1e1e1e;letter-spacing:-0.28px;">Standardkessel</div>
<div class="t" style="left:1450.50px;top:804px;font-size:12px;color:#1e1e1e;letter-spacing:-0.28px;">Nennleistung:</div>
<div class="t" style="left:1584.50px;top:804px;font-size:12px;color:#1e1e1e;letter-spacing:-0.28px;">10,0 kW</div>
<div class="t" style="left:1450.50px;top:830px;font-size:12px;font-weight:bold;color:#3b3e45;letter-spacing:-0.1px;">Photovoltaiksystem</div>
<div class="t" style="left:1450.50px;top:852px;font-size:12px;color:#1e1e1e;letter-spacing:-0.28px;">Leistung:</div>
<div class="t" style="left:1584.50px;top:852px;font-size:12px;color:#1e1e1e;letter-spacing:-0.28px;">5,4 kW</div>
<div class="t" style="left:1450.50px;top:874px;font-size:12px;color:#1e1e1e;letter-spacing:-0.28px;">Batteriekapazität:</div>
<div class="t" style="left:1584.50px;top:874px;font-size:12px;color:#1e1e1e;letter-spacing:-0.28px;">5 kWh</div>
<div class="t" style="left:1450.50px;top:900px;font-size:12px;font-weight:bold;color:#3b3e45;letter-spacing:-0.1px;">Heizungspufferspeicher mit WT</div>
<div class="t" style="left:1450.50px;top:922px;font-size:12px;color:#1e1e1e;letter-spacing:-0.28px;">Hersteller:</div>
<div class="t" style="left:1584.50px;top:922px;font-size:12px;color:#1e1e1e;letter-spacing:-0.28px;">Standard</div>
<div class="t" style="left:1450.50px;top:944px;font-size:12px;color:#1e1e1e;letter-spacing:-0.28px;">Produkt:</div>
<div class="t" style="left:1584.50px;top:944px;font-size:12px;color:#1e1e1e;letter-spacing:-0.28px;">Standard</div>
<div class="t" style="left:1450.50px;top:966px;font-size:12px;color:#1e1e1e;letter-spacing:-0.28px;">Volumen:</div>
<div class="t" style="left:1584.50px;top:966px;font-size:12px;color:#1e1e1e;letter-spacing:-0.28px;">750 l</div>
<svg class="r" style="left:0px;top:0px;" width="1700" height="320" viewBox="0 0 1700 320"><defs><linearGradient id="sg" x1="0" y1="0" x2="0" y2="1"><stop offset="0" stop-color="#ec848c"/><stop offset="0.55" stop-color="#b89cb8"/><stop offset="1" stop-color="#70b8dc"/></linearGradient><linearGradient id="hx" x1="0" y1="0" x2="0" y2="1"><stop offset="0" stop-color="#ea8890"/><stop offset="1" stop-color="#74bade"/></linearGradient></defs><path d="M1548.3 253.5V306.5Q1548.3 308.5 1550.3 308.5H1668" fill="none" stroke="#7fc0e2" stroke-width="1.4" stroke-linejoin="round"/><path d="M1564 253.5V294Q1564 296 1566 296H1581" fill="none" stroke="#eda2a8" stroke-width="1.4" stroke-linejoin="round"/><path d="M1531.5 273.3H1605.5Q1607.3 273.3 1607.3 275V299Q1607.3 300.8 1609 300.8H1656.5" fill="none" stroke="#eda2a8" stroke-width="1.4" stroke-linejoin="round"/><path d="M1531.5 287.5H1581" fill="none" stroke="#7fc0e2" stroke-width="1.4" stroke-linejoin="round"/><path d="M1595.8 287H1611.5Q1613.2 287 1613.2 285.3V248.2Q1613.2 246.5 1615 246.5H1622" fill="none" stroke="#eda2a8" stroke-width="1.4" stroke-linejoin="round"/><path d="M1595.8 296.1H1616Q1617.8 296.1 1617.8 294.4V260Q1617.8 257.5 1620.3 257.5H1622" fill="none" stroke="#7fc0e2" stroke-width="1.4" stroke-linejoin="round"/><path d="M1595.8 292.2H1601Q1602.6 292.2 1602.6 294V308.5" fill="none" stroke="#7fc0e2" stroke-width="1.4" stroke-linejoin="round"/><path d="M1665.8 300.8H1669.5Q1671.3 300.8 1671.3 299V272" fill="none" stroke="#eda2a8" stroke-width="1.4" stroke-linejoin="round"/><path d="M1516 252.7V269.2" fill="none" stroke="#eda2a8" stroke-width="1.4" stroke-linejoin="round"/><path d="M1526 252.7V269.2" fill="none" stroke="#7fc0e2" stroke-width="1.4" stroke-linejoin="round"/><path d="M1485.3 256.8V265.3H1512.5V269.5" fill="none" stroke="#444" stroke-width="1.2" stroke-dasharray="2.6 1.8"/><rect x="1474.7" y="226.9" width="20.6" height="29.4" fill="#fafafa" stroke="#666" stroke-width="1.1"/><rect x="1476.4" y="228.5" width="17.2" height="26.2" fill="#555555"/><path d="M1487 235.5L1482 243H1485.2L1483.6 248.3L1488.7 240.5H1485.4Z" fill="#fff"/><rect x="1513.6" y="237.7" width="14.6" height="14.6" rx="1.5" fill="#fafafa" stroke="#8a8a8a" stroke-width="1.2"/><path d="M1520.2 240.3C1520.6 241.5 1519.2 242.5 1518.3 243.7C1517.5 244.7 1517.3 245.6 1517.3 246.3C1517.3 248.3 1518.9 249.8 1521 249.8C1523.1 249.8 1524.7 248.3 1524.7 246.3C1524.7 244.8 1524 243.6 1523 242.7C1523 243.8 1522.4 244.4 1521.8 244.6C1522 242.8 1521.3 241.2 1520.2 240.3Z" fill="none" stroke="#e4707a" stroke-width="0.9"/><path d="M1519.6 248.5C1519.6 247.3 1520.4 246.3 1521 246C1521.6 246.3 1522.4 247.3 1522.4 248.5" fill="none" stroke="#e4707a" stroke-width="0.8"/><rect x="1510.9" y="269.8" width="20.2" height="20.4" rx="2" fill="#fafafa" stroke="#555" stroke-width="1.2"/><circle cx="1521" cy="273.9" r="2.2" fill="#fff" stroke="#e4707a" stroke-width="0.9"/><path d="M1518.9 274.8L1515.5 277.2V279M1523.1 274.8L1526.5 277.2V279" fill="none" stroke="#e4707a" stroke-width="0.9"/><rect x="1513.7" y="277.3" width="2.2" height="3" fill="#d85260"/><rect x="1513.7" y="280.3" width="2.2" height="3" fill="#4a86c8"/><rect x="1526.1" y="277.3" width="2.2" height="3" fill="#d85260"/><rect x="1526.1" y="280.3" width="2.2" height="3" fill="#4a86c8"/><path d="M1514.8 283.5V285Q1514.8 286.6 1516.5 286.6H1525.5Q1527.2 286.6 1527.2 285V283.5" fill="none" stroke="#6aaedc" stroke-width="0.9"/><path d="M1518.5 285.5V287.8M1523.5 285.5V287.8" stroke="#6aaedc" stroke-width="0.7"/><rect x="1545.6" y="223.6" width="20.6" height="29.4" fill="#fafafa" stroke="#666" stroke-width="1.1"/><rect x="1547.3" y="225.2" width="17.2" height="26.4" fill="#555555"/><path d="M1580.8 274C1580.8 272 1584 271.3 1588.1 271.3C1592.2 271.3 1595.4 272 1595.4 274V310C1595.4 312 1592.2 312.8 1588.1 312.8C1584 312.8 1580.8 312 1580.8 310Z" fill="url(#sg)" stroke="#6d6d6d" stroke-width="1"/><path d="M1582.3 295.6H1593.9" stroke="#555" stroke-width="1"/><path d="M1582.3 298.2H1593.9" stroke="#555" stroke-width="1"/><path d="M1582.3 300.8H1593.9" stroke="#555" stroke-width="1"/><path d="M1582.3 303.4H1593.9" stroke="#555" stroke-width="1"/><path d="M1582.3 306H1593.9" stroke="#555" stroke-width="1"/><rect x="1621.8" y="245.6" width="17.6" height="3.2" rx="1.6" fill="#f6e4e6" stroke="#e8939a" stroke-width="1"/><rect x="1621.8" y="250.20000000000002" width="17.6" height="3.2" rx="1.6" fill="#e9e4ef" stroke="#b9a8c4" stroke-width="1"/><rect x="1621.8" y="254.6" width="17.6" height="3.2" rx="1.6" fill="#e4f0f8" stroke="#7fbde0" stroke-width="1"/><circle cx="1617.8" cy="262.8" r="2.7" fill="#e8e8e8" stroke="#6a6a6a" stroke-width="1"/><circle cx="1548.3" cy="299.9" r="2.7" fill="#8a8a8a" stroke="#5a5a5a" stroke-width="1"/><path d="M1611.8 264.5L1614.5 269.5M1611.8 269.5L1614.5 264.5" stroke="#555" stroke-width="0.8"/><path d="M1599.8 306L1602.6 308.5L1605.4 306" fill="none" stroke="#555" stroke-width="0.8"/><rect x="1656.7" y="297.8" width="9" height="14.4" fill="url(#hx)" stroke="#666" stroke-width="1"/><path d="M1657.2 311.7L1665.2 298.3" stroke="#555" stroke-width="0.8"/><path d="M1673.4 271V263C1673.4 260.2 1675.5 258.8 1678 258.8C1680.7 258.8 1682.6 260.5 1682.6 262.8H1683.8" fill="none" stroke="#7a7a7a" stroke-width="1.5"/><rect x="1669.2" y="270.3" width="9.6" height="2.4" fill="#8e4a52"/><path d="M1681.5 265.5V270M1683.6 265.5V270" stroke="#a6d2ea" stroke-width="0.9" stroke-dasharray="1.1 0.9"/><path d="M1676.5 273V281.5M1675.2 279.3L1676.5 281.8L1677.8 279.3" fill="none" stroke="#555" stroke-width="0.9"/><path d="M1670 308.5H1676M1673 307L1671 308.5L1673 310" fill="none" stroke="#666" stroke-width="0.8"/></svg>
</body></html>
